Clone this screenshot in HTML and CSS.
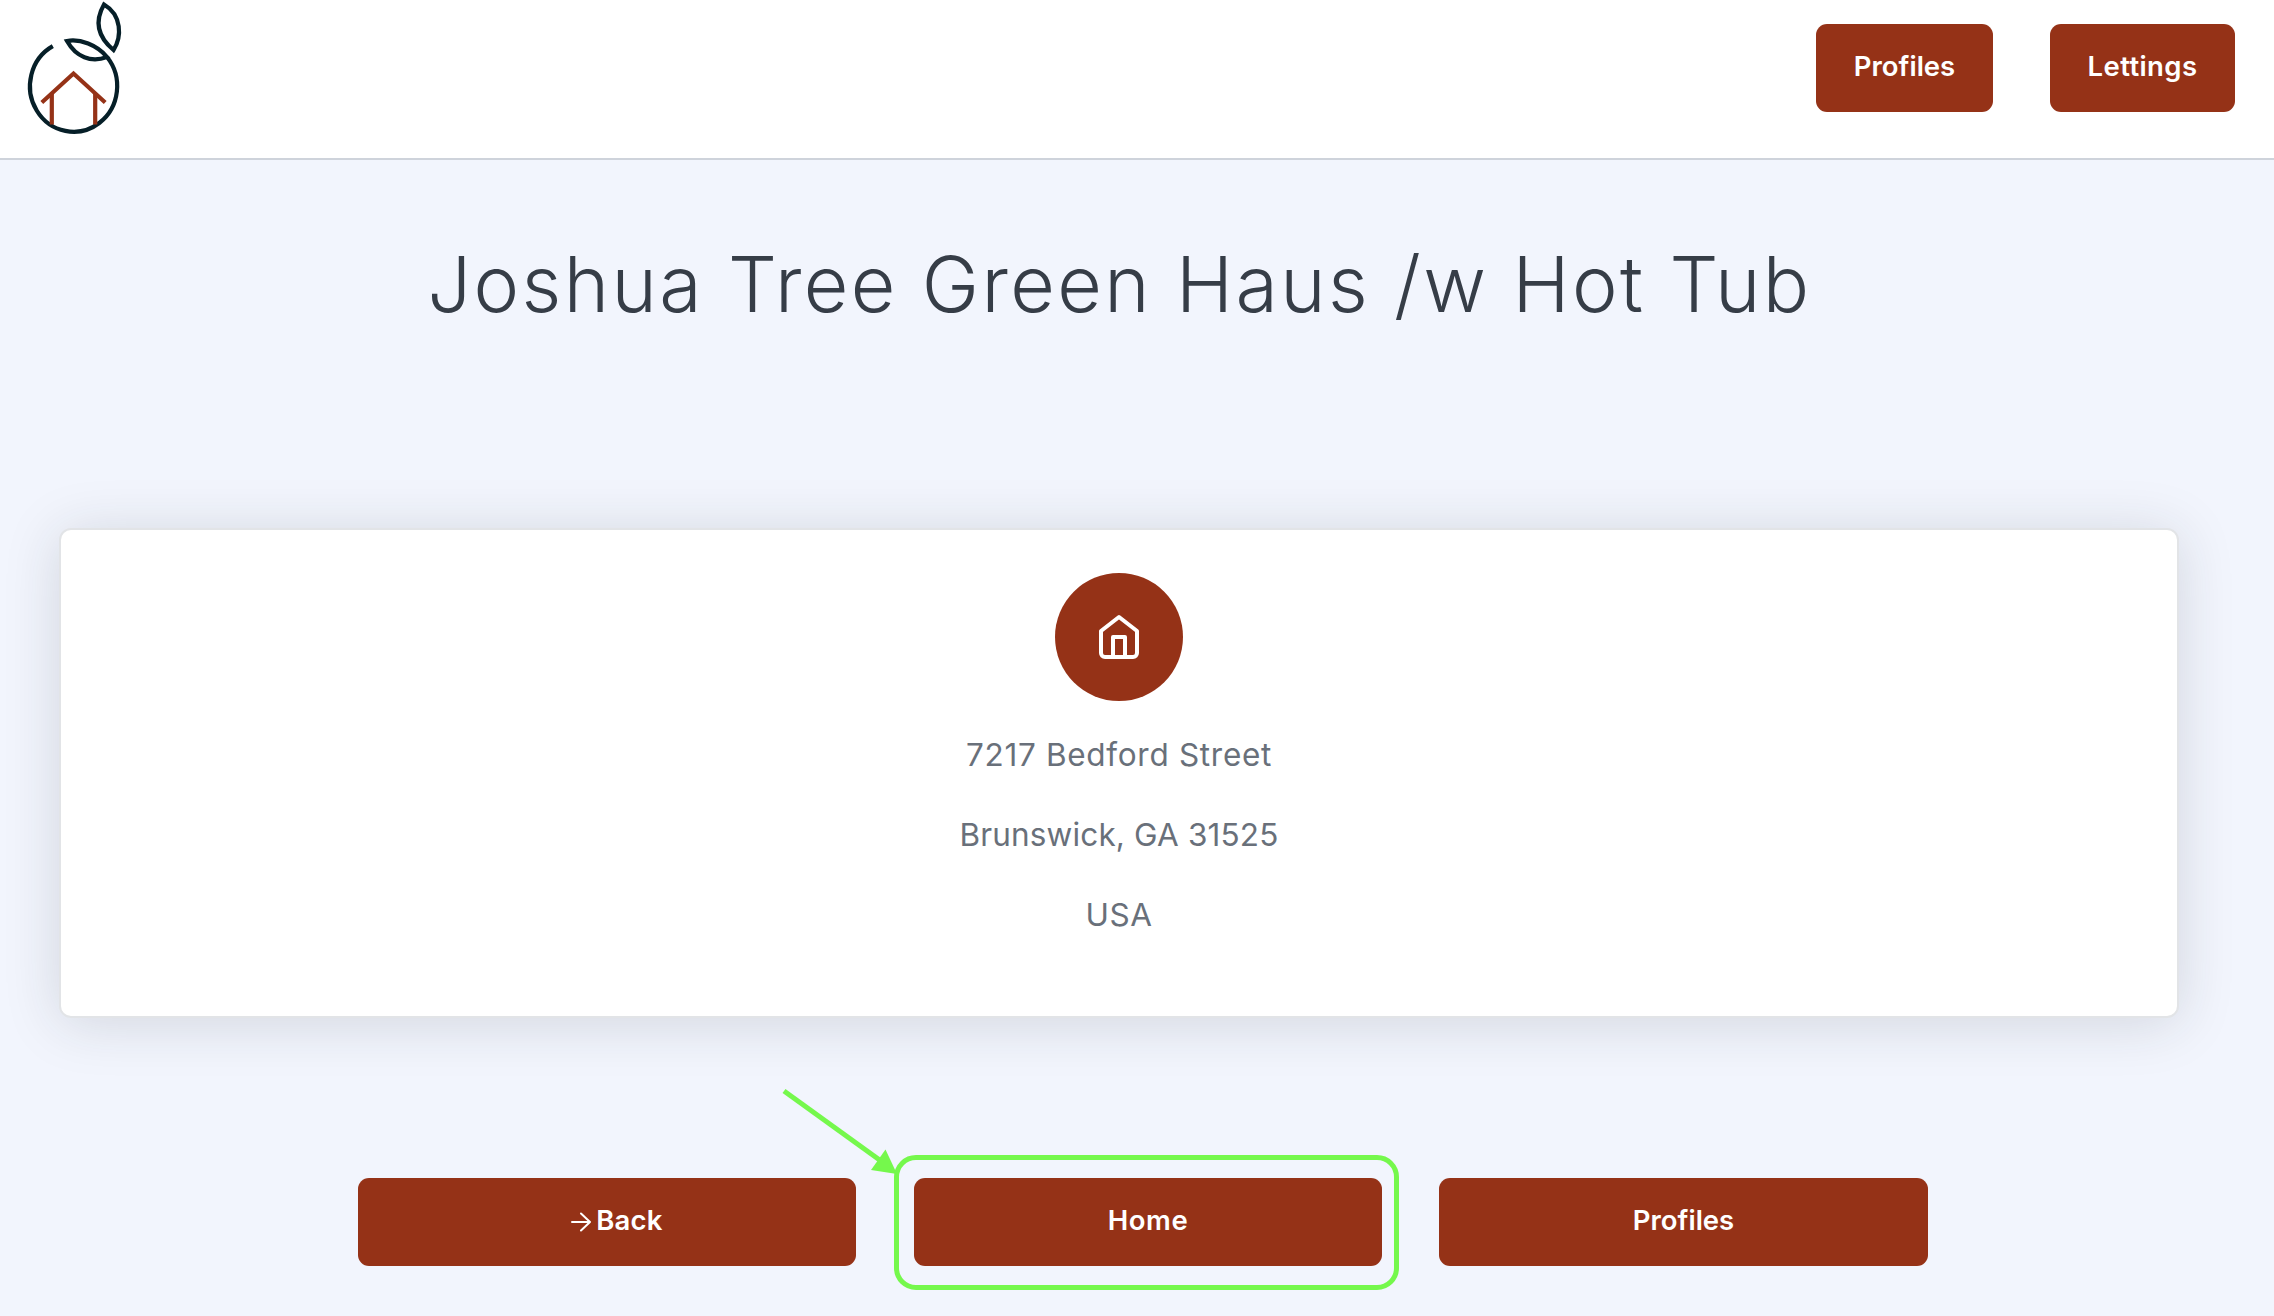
FILE: index.html
```html
<!DOCTYPE html>
<html lang="en">
<head>
<meta charset="utf-8">
<title>Joshua Tree Green Haus /w Hot Tub</title>
<link rel="stylesheet" href="styles.css">
</head>
<body>
<header class="header">
  <a class="logo" href="#" aria-label="Home page">
    <svg width="140" height="140" viewBox="0 0 140 140" fill="none" stroke-width="4.2">
      <g stroke="#061f28">
        <path d="M52.8 46.2A43.6 45.500 0 1 0 107 57"/>
        <path d="M67 41C80 38.500 97 45 107 57C91 63 76 57 67 41Z"/>
        <path d="M104 4.500C94 22 98 37 113.500 50C122 37 122 15 104 4.500Z"/>
      </g>
      <g stroke="#953217">
        <path d="M41.800 102.500L73.500 73.500L105.200 102.500"/>
        <path d="M51.800 94V124.500M95.200 94V124.500"/>
      </g>
    </svg>
  </a>
  <nav class="nav">
    <a class="btn nav-profiles" href="#"><span>Profiles</span></a>
    <a class="btn nav-lettings" href="#"><span>Lettings</span></a>
  </nav>
</header>
<main class="main">
  <h1 class="title"><span>Joshua Tree Green Haus /w Hot Tub</span></h1>
  <section class="card">
    <div class="badge">
      <svg width="48" height="48" viewBox="0 0 24 24" fill="none" stroke="#fff" stroke-width="2" stroke-linecap="round" stroke-linejoin="round">
        <path d="M3 9l9-7 9 7v11a2 2 0 0 1-2 2H5a2 2 0 0 1-2-2z"/>
        <path d="M9 22V12h6v10"/>
      </svg>
    </div>
    <p class="line street"><span>7217 Bedford Street</span></p>
    <p class="line city"><span>Brunswick, GA 31525</span></p>
    <p class="line country"><span>USA</span></p>
  </section>
  <div class="actions">
    <a class="btn back" href="#">
      <svg class="arrow" width="20" height="20" viewBox="0 0 20 20" fill="none" stroke="#fff" stroke-width="2" stroke-linecap="round" stroke-linejoin="round"><path d="M1 10H19M10 1.500L19 10L10 18.500"/></svg>
      <span>Back</span>
    </a>
    <a class="btn home" href="#"><span>Home</span>
      <svg class="pointer" width="126" height="94" viewBox="0 0 126 94"><path d="M3 7L100 77" stroke="#75f84c" stroke-width="5"/><path d="M116 90L104.500 65.500L90 86Z" fill="#75f84c"/></svg>
    </a>
    <a class="btn profiles" href="#"><span>Profiles</span></a>
  </div>
</main>
</body>
</html>
```
FILE: styles.css
```css
*, *::before, *::after { box-sizing: border-box; }
body {
  margin: 0;
  height: 1316px;
  overflow: hidden;
  background: #f2f5fd;
  color: #69707a;
  font-family: Inter, "Liberation Sans", sans-serif;
}
.header {
  height: 160px;
  display: flex;
  justify-content: space-between;
  background: #fff;
  border-bottom: 2px solid #ced3db;
}
.logo { display: block; height: 140px; }
.nav { display: flex; gap: 57px; padding: 24px 39px 0 0; }
.btn {
  position: relative;
  display: flex;
  align-items: center;
  justify-content: center;
  height: 88px;
  padding-bottom: 4px;
  border-radius: 11px;
  background: #953217;
  color: #fff;
  font-size: 27.5px;
  font-weight: 600;
  line-height: 32px;
  text-decoration: none;
  white-space: nowrap;
}
.nav-profiles { width: 177px; }
.nav-lettings { width: 185px; letter-spacing: .4px; }
.title {
  margin: 0;
  padding: 76px 35px 0 0;
  font-size: 77px;
  font-weight: 330;
  line-height: 96px;
  letter-spacing: 2.4px;
  text-align: center;
  color: #363d47;
  white-space: nowrap;
}
.card {
  width: 2120px;
  height: 490px;
  margin: 196px 0 0 59px;
  padding-top: 43px;
  border: 2px solid #e2e4e7;
  border-radius: 12px;
  background-color: #fff;
  box-shadow: 0 5px 56px rgba(33, 40, 50, .15);
  text-align: center;
}
.badge {
  display: flex;
  align-items: center;
  justify-content: center;
  width: 128px;
  height: 128px;
  margin: 0 auto 30px;
  border-radius: 50%;
  background: #953217;
}
.line {
  margin: 0 0 32px;
  font-size: 31.5px;
  line-height: 48px;
}
.street { letter-spacing: .7px; }
.city { letter-spacing: .15px; }
.country { letter-spacing: .5px; }
.actions {
  display: flex;
  gap: 58px;
  padding: 160px 0 0 358px;
}
.back { width: 498px; gap: 5px; padding-left: 20px; letter-spacing: .2px; }
.home { width: 468px; letter-spacing: .6px; }
.profiles { width: 489px; margin-left: -1px; }
.arrow { margin-top: 4px; }
.home::after {
  content: "";
  position: absolute;
  left: -20px;
  top: -23px;
  width: 505px;
  height: 135px;
  border: 5px solid #75f84c;
  border-radius: 22px;
}
.pointer {
  position: absolute;
  left: -133px;
  top: -94px;
}
```
